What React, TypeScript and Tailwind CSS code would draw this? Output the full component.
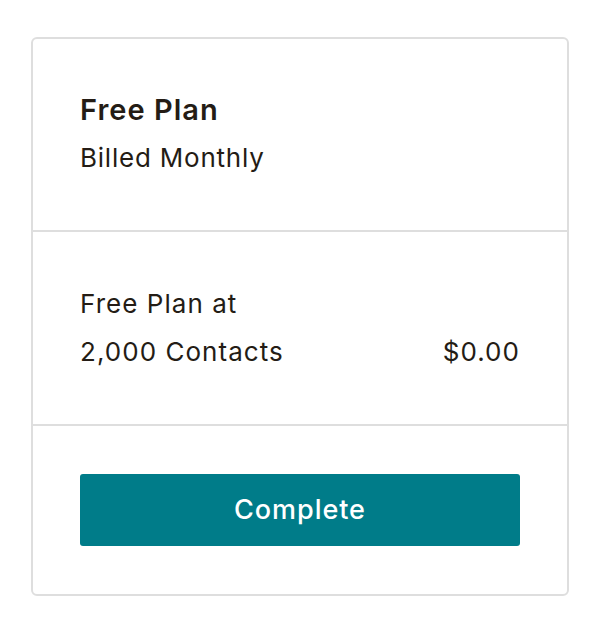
export default function App() {
    return (
        <div className="min-h-screen bg-white pt-[37px] pl-[31px]" style={{ fontFamily: 'Inter, "Liberation Sans", sans-serif' }}>
            <div className="w-[538px] rounded-md border-2 border-[#dedede] bg-white text-[#241c15]">
                <div className="px-[47px] pt-[47px] pb-[48px]">
                    <h2 className="text-[29px] font-semibold leading-[48px] tracking-[0.035em]">Free Plan</h2>
                    <p className="text-[26px] leading-[48px] tracking-[0.03em]">Billed Monthly</p>
                </div>
                <div className="border-t-2 border-[#dedede] px-[47px] pt-[48px] pb-[48px] text-[26px] leading-[48px] tracking-[0.04em]">
                    <p>Free Plan at</p>
                    <div className="flex items-center justify-between">
                        <span>2,000 Contacts</span>
                        <span>$0.00</span>
                    </div>
                </div>
                <div className="border-t-2 border-[#dedede] px-[47px] pt-[48px] pb-[48px]">
                    <button className="flex h-[72px] w-full items-center justify-center rounded-[3px] bg-[#007c89] text-[27px] font-medium tracking-[0.035em] text-white">
                        Complete
                    </button>
                </div>
            </div>
        </div>
    )
}
